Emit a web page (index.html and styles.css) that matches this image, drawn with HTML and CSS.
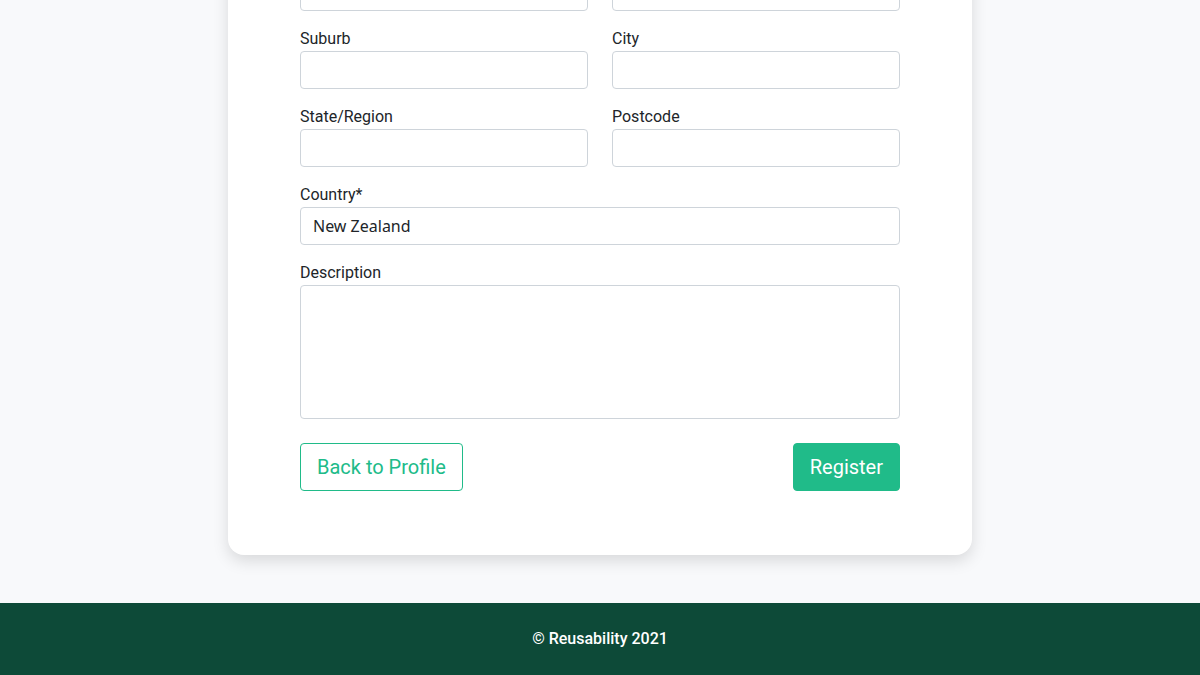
FILE: index.html
```html
<!DOCTYPE html>
<html lang="en">
<head>
<meta charset="utf-8">
<title>Register</title>
<link rel="stylesheet" href="styles.css">
</head>
<body>
<main class="page">
  <form class="card">
    <div class="row">
      <div class="field"><input class="input" type="text"></div>
      <div class="field"><input class="input" type="text"></div>
    </div>
    <div class="row">
      <div class="field"><label class="label">Suburb</label><input class="input" type="text"></div>
      <div class="field"><label class="label">City</label><input class="input" type="text"></div>
    </div>
    <div class="row">
      <div class="field"><label class="label">State/Region</label><input class="input" type="text"></div>
      <div class="field"><label class="label">Postcode</label><input class="input" type="text"></div>
    </div>
    <div class="field">
      <label class="label">Country*</label>
      <input class="input" type="text" value="New Zealand">
    </div>
    <div class="field">
      <label class="label">Description</label>
      <textarea class="input textarea"></textarea>
    </div>
    <div class="actions">
      <button type="button" class="btn btn-outline">Back to Profile</button>
      <button type="button" class="btn btn-primary">Register</button>
    </div>
  </form>
</main>
<footer class="footer">© Reusability 2021</footer>
</body>
</html>
```
FILE: styles.css
```css
* { box-sizing: border-box; }
html, body { margin: 0; padding: 0; }
body {
  background: #f8f9fb;
  font-family: Roboto, "Liberation Sans", sans-serif;
  color: #212529;
  font-size: 16px;
}
.page {
  display: flex;
  justify-content: center;
  padding-bottom: 48px;
}
.card {
  width: 744px;
  margin-top: -89px;
  background: #fff;
  border-radius: 16px;
  box-shadow: 0 6px 16px rgba(0,0,0,0.13);
  padding: 62px 72px 64px;
  display: flex;
  flex-direction: column;
}
.row {
  display: grid;
  grid-template-columns: 1fr 1fr;
  column-gap: 24px;
}
.field {
  display: flex;
  flex-direction: column;
  margin-bottom: 16px;
}
.label {
  line-height: 24px;
  height: 24px;
  font-size: 16px;
  color: #212529;
}
.input {
  height: 38px;
  border: 1px solid #ced4da;
  border-radius: 4px;
  padding: 0 12px;
  font-family: "Noto Sans", "Open Sans", sans-serif;
  font-size: 16px;
  color: #212529;
  background: #fff;
  outline: none;
}
.textarea {
  height: 134px;
  resize: none;
}
.actions {
  display: flex;
  justify-content: space-between;
  margin-top: 8px;
}
.btn {
  height: 48px;
  font-family: Roboto, "Liberation Sans", sans-serif;
  font-size: 20px;
  border-radius: 4px;
  padding: 0 16px;
  cursor: pointer;
}
.btn-outline {
  background: #fff;
  color: #20bb89;
  border: 1px solid #20bb89;
}
.btn-primary {
  background: #20bb89;
  color: #fff;
  border: 1px solid #20bb89;
}
.footer {
  background: #0d4a38;
  color: #fff;
  text-align: center;
  font-size: 16px;
  font-weight: 500;
  height: 72px;
  line-height: 72px;
}
```
